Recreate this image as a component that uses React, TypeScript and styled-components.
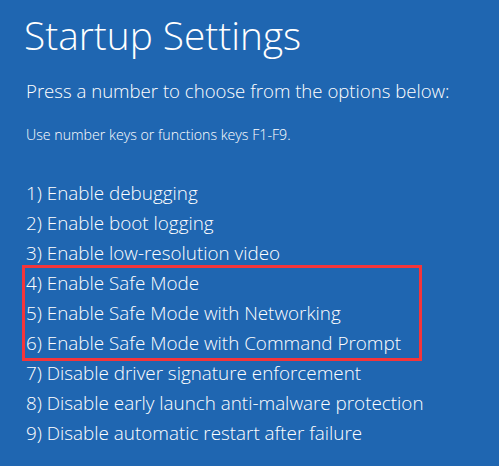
import React from "react";
import styled, { createGlobalStyle } from "styled-components";

const GlobalStyle = createGlobalStyle`
  html, body {
    margin: 0;
    padding: 0;
    background: #1f66b1;
  }
  body {
    font-family: "Open Sans", "Noto Sans", sans-serif;
    color: #ffffff;
  }
`;

const Screen = styled.main`
  width: 499px;
  height: 466px;
  box-sizing: border-box;
  background: #1f66b1;
  padding: 12px 0 0 24px;
  overflow: hidden;
`;

const Title = styled.h1`
  margin: 0;
  font-weight: 300;
  font-size: 38.8px;
  line-height: 46px;
`;

const Prompt = styled.p`
  margin: 20px 0 0 2px;
  font-weight: 300;
  font-size: 18.6px;
  line-height: 26px;
`;

const Hint = styled.p`
  margin: 22px 0 0 2px;
  font-weight: 300;
  font-size: 14.2px;
  line-height: 18px;
`;

const OptionList = styled.ol`
  list-style: none;
  margin: 34px 0 0 0;
  padding: 0;
  display: flex;
  flex-direction: column;
`;

const Group = styled.li<{ $highlight?: boolean }>`
  display: flex;
  flex-direction: column;
  margin: -3px 0 -3px -2px;
  width: 400px;
  box-sizing: border-box;
  border: 3px solid ${(p) => (p.$highlight ? "#f5353a" : "transparent")};
  padding-left: 1px;
`;

const Option = styled.div`
  font-weight: 300;
  font-size: 18.85px;
  line-height: 30px;
  white-space: nowrap;
`;

const groups: { highlight: boolean; items: string[] }[] = [
  {
    highlight: false,
    items: [
      "1) Enable debugging",
      "2) Enable boot logging",
      "3) Enable low-resolution video",
    ],
  },
  {
    highlight: true,
    items: [
      "4) Enable Safe Mode",
      "5) Enable Safe Mode with Networking",
      "6) Enable Safe Mode with Command Prompt",
    ],
  },
  {
    highlight: false,
    items: [
      "7) Disable driver signature enforcement",
      "8) Disable early launch anti-malware protection",
      "9) Disable automatic restart after failure",
    ],
  },
];

export default function App() {
  return (
    <>
      <GlobalStyle />
      <Screen>
        <Title>Startup Settings</Title>
        <Prompt>Press a number to choose from the options below:</Prompt>
        <Hint>Use number keys or functions keys F1-F9.</Hint>
        <OptionList>
          {groups.map((g, i) => (
            <Group key={i} $highlight={g.highlight}>
              {g.items.map((t) => (
                <Option key={t}>{t}</Option>
              ))}
            </Group>
          ))}
        </OptionList>
      </Screen>
    </>
  );
}
